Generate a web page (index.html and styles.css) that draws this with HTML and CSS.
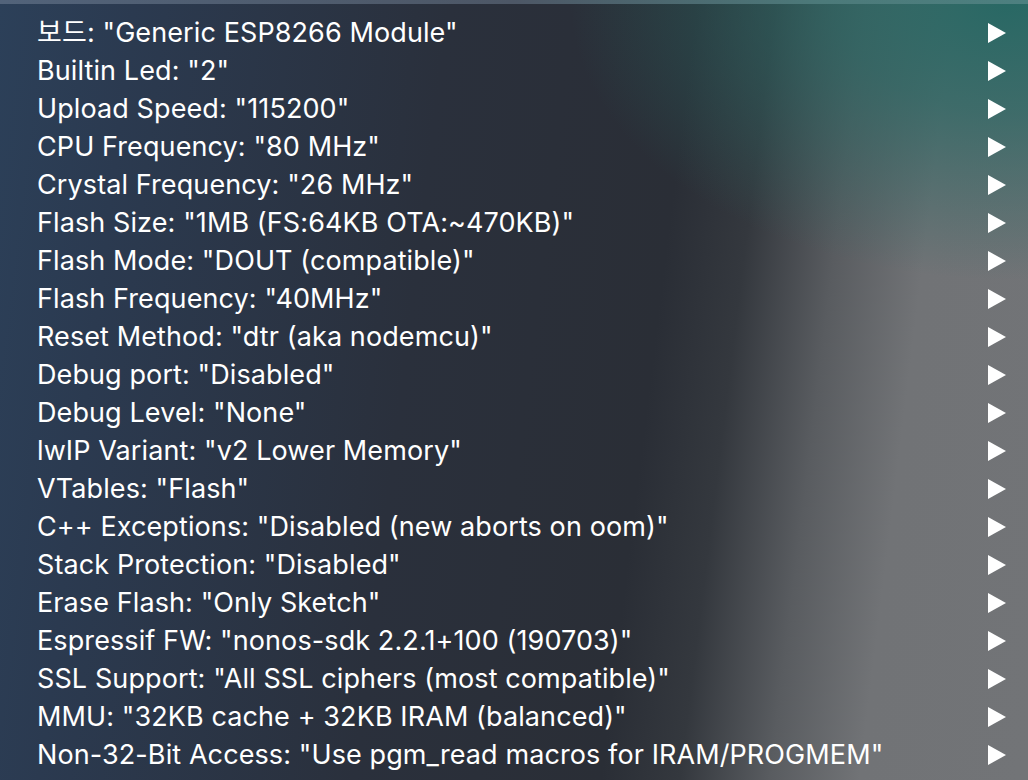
FILE: index.html
```html
<!DOCTYPE html>
<html lang="ko">
<head>
<meta charset="utf-8">
<title>Board menu</title>
<link rel="stylesheet" href="styles.css">
</head>
<body>
<div class="menu">
  <div class="topband"></div>
  <ul class="items">
    <li class="item"><span class="label">보드: "Generic ESP8266 Module"</span><svg class="arrow" viewBox="0 0 18 20"><polygon points="0,0 18,10 0,20"/></svg></li>
    <li class="item"><span class="label">Builtin Led: "2"</span><svg class="arrow" viewBox="0 0 18 20"><polygon points="0,0 18,10 0,20"/></svg></li>
    <li class="item"><span class="label">Upload Speed: "115200"</span><svg class="arrow" viewBox="0 0 18 20"><polygon points="0,0 18,10 0,20"/></svg></li>
    <li class="item"><span class="label">CPU Frequency: "80 MHz"</span><svg class="arrow" viewBox="0 0 18 20"><polygon points="0,0 18,10 0,20"/></svg></li>
    <li class="item"><span class="label">Crystal Frequency: "26 MHz"</span><svg class="arrow" viewBox="0 0 18 20"><polygon points="0,0 18,10 0,20"/></svg></li>
    <li class="item"><span class="label">Flash Size: "1MB (FS:64KB OTA:~470KB)"</span><svg class="arrow" viewBox="0 0 18 20"><polygon points="0,0 18,10 0,20"/></svg></li>
    <li class="item"><span class="label">Flash Mode: "DOUT (compatible)"</span><svg class="arrow" viewBox="0 0 18 20"><polygon points="0,0 18,10 0,20"/></svg></li>
    <li class="item"><span class="label">Flash Frequency: "40MHz"</span><svg class="arrow" viewBox="0 0 18 20"><polygon points="0,0 18,10 0,20"/></svg></li>
    <li class="item"><span class="label">Reset Method: "dtr (aka nodemcu)"</span><svg class="arrow" viewBox="0 0 18 20"><polygon points="0,0 18,10 0,20"/></svg></li>
    <li class="item"><span class="label">Debug port: "Disabled"</span><svg class="arrow" viewBox="0 0 18 20"><polygon points="0,0 18,10 0,20"/></svg></li>
    <li class="item"><span class="label">Debug Level: "None"</span><svg class="arrow" viewBox="0 0 18 20"><polygon points="0,0 18,10 0,20"/></svg></li>
    <li class="item"><span class="label">lwIP Variant: "v2 Lower Memory"</span><svg class="arrow" viewBox="0 0 18 20"><polygon points="0,0 18,10 0,20"/></svg></li>
    <li class="item"><span class="label">VTables: "Flash"</span><svg class="arrow" viewBox="0 0 18 20"><polygon points="0,0 18,10 0,20"/></svg></li>
    <li class="item"><span class="label">C++ Exceptions: "Disabled (new aborts on oom)"</span><svg class="arrow" viewBox="0 0 18 20"><polygon points="0,0 18,10 0,20"/></svg></li>
    <li class="item"><span class="label">Stack Protection: "Disabled"</span><svg class="arrow" viewBox="0 0 18 20"><polygon points="0,0 18,10 0,20"/></svg></li>
    <li class="item"><span class="label">Erase Flash: "Only Sketch"</span><svg class="arrow" viewBox="0 0 18 20"><polygon points="0,0 18,10 0,20"/></svg></li>
    <li class="item"><span class="label">Espressif FW: "nonos-sdk 2.2.1+100 (190703)"</span><svg class="arrow" viewBox="0 0 18 20"><polygon points="0,0 18,10 0,20"/></svg></li>
    <li class="item"><span class="label">SSL Support: "All SSL ciphers (most compatible)"</span><svg class="arrow" viewBox="0 0 18 20"><polygon points="0,0 18,10 0,20"/></svg></li>
    <li class="item"><span class="label">MMU: "32KB cache + 32KB IRAM (balanced)"</span><svg class="arrow" viewBox="0 0 18 20"><polygon points="0,0 18,10 0,20"/></svg></li>
    <li class="item"><span class="label">Non-32-Bit Access: "Use pgm_read macros for IRAM/PROGMEM"</span><svg class="arrow" viewBox="0 0 18 20"><polygon points="0,0 18,10 0,20"/></svg></li>
  </ul>
</div>
</body>
</html>
```
FILE: styles.css
```css
html, body {
  margin: 0;
  padding: 0;
  width: 1028px;
  height: 780px;
  overflow: hidden;
}

body {
  font-family: Inter, "Noto Sans CJK KR", "Noto Sans", sans-serif;
  color: #ffffff;
}

.menu {
  width: 1028px;
  height: 780px;
  background:
    radial-gradient(ellipse 440px 280px at 1010px 0px, rgba(40, 104, 100, 1) 0%, rgba(40, 104, 100, 0.7) 40%, rgba(40, 104, 100, 0) 100%),
    linear-gradient(97deg, #2c4059 0%, #2b3a50 12%, #2a303c 40%, #2a2e36 62%, #34383e 69%, #595c60 77%, #717376 85%, #727477 100%);
  display: flex;
  flex-direction: column;
}

.topband {
  height: 4px;
  flex: none;
  background: linear-gradient(90deg, #52637a 0%, #4d5766 50%, #4c7a7a 80%, #4d8080 100%);
}

.items {
  list-style: none;
  margin: 0;
  padding: 10px 22px 0 37px;
  display: flex;
  flex-direction: column;
}

.item {
  height: 38px;
  display: flex;
  align-items: center;
  justify-content: space-between;
}

.label {
  font-size: 27px;
  line-height: 38px;
  white-space: nowrap;
  letter-spacing: 0.1px;
}

.arrow {
  width: 18px;
  height: 20px;
  flex: none;
  fill: #ffffff;
}
```
